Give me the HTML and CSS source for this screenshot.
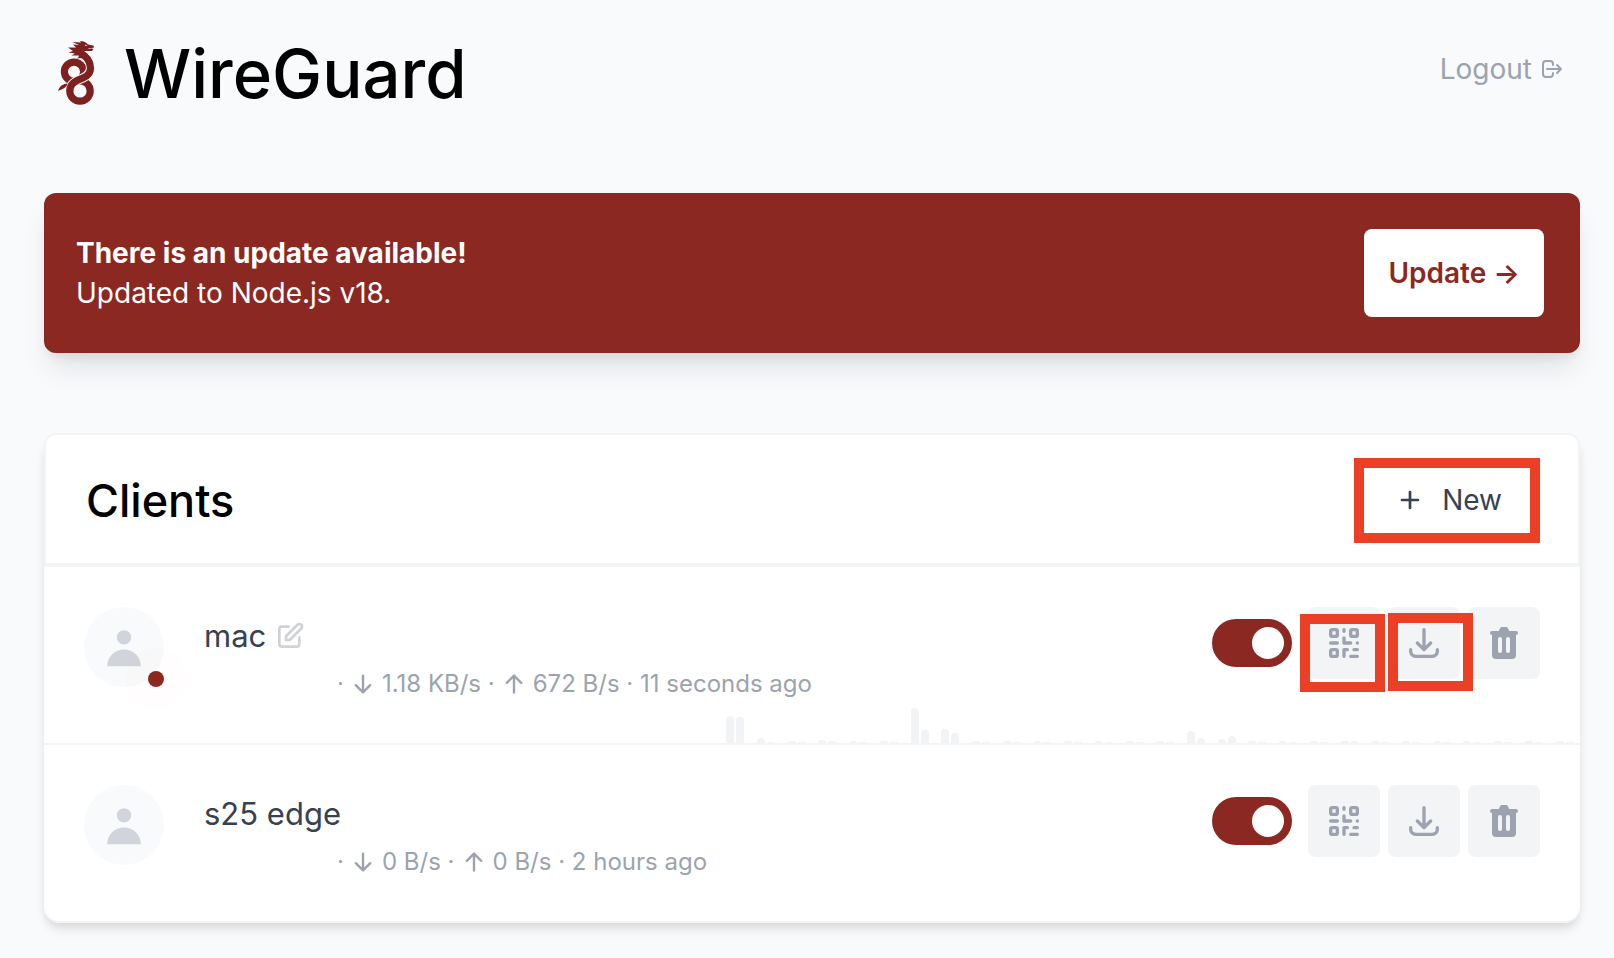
FILE: index.html
```html
<!DOCTYPE html>
<html lang="en">
<head>
<meta charset="utf-8">
<title>WireGuard</title>
<link rel="stylesheet" href="styles.css">
</head>
<body>
<svg class="sprite" aria-hidden="true">
  <symbol id="user" viewBox="0 0 20 20"><path fill="currentColor" d="M10 9a3 3 0 100-6 3 3 0 000 6zm-7 9a7 7 0 1114 0H3z"/></symbol>
  <symbol id="down" viewBox="0 0 20 20"><path fill="currentColor" d="M16.707 10.293a1 1 0 010 1.414l-6 6a1 1 0 01-1.414 0l-6-6a1 1 0 111.414-1.414L9 14.586V3a1 1 0 012 0v11.586l4.293-4.293a1 1 0 011.414 0z"/></symbol>
  <symbol id="up" viewBox="0 0 20 20"><path fill="currentColor" d="M3.293 9.707a1 1 0 010-1.414l6-6a1 1 0 011.414 0l6 6a1 1 0 01-1.414 1.414L11 5.414V17a1 1 0 11-2 0V5.414L4.707 9.707a1 1 0 01-1.414 0z"/></symbol>
  <symbol id="qr" viewBox="0 0 24 24"><path class="stroke" d="M12 4v1m6 11h2m-6 0h-2v4m0-11v3m0 0h.01M12 12h4.01M16 20h4M4 12h4m12 0h.01M5 8h2a1 1 0 001-1V5a1 1 0 00-1-1H5a1 1 0 00-1 1v2a1 1 0 001 1zm12 0h2a1 1 0 001-1V5a1 1 0 00-1-1h-2a1 1 0 00-1 1v2a1 1 0 001 1zM5 20h2a1 1 0 001-1v-2a1 1 0 00-1-1H5a1 1 0 00-1 1v2a1 1 0 001 1z"/></symbol>
  <symbol id="download" viewBox="0 0 24 24"><path class="stroke" d="M4 16v1a3 3 0 003 3h10a3 3 0 003-3v-1m-4-4l-4 4m0 0l-4-4m4 4V4"/></symbol>
  <symbol id="trash" viewBox="0 0 20 20"><path fill="currentColor" fill-rule="evenodd" d="M9 2a1 1 0 00-.894.553L7.382 4H4a1 1 0 000 2v10a2 2 0 002 2h8a2 2 0 002-2V6a1 1 0 100-2h-3.382l-.724-1.447A1 1 0 0011 2H9zM7 8a1 1 0 012 0v6a1 1 0 11-2 0V8zm5-1a1 1 0 00-1 1v6a1 1 0 102 0V8a1 1 0 00-1-1z"/></symbol>
</svg>

<div class="page">
  <header class="top">
    <h1 class="brand">
      <svg class="dragon" viewBox="0 0 40 68" aria-hidden="true">
        <g fill="none" stroke="#7d2020">
          <circle cx="18" cy="31.700" r="9.600" stroke-width="7.200"/>
          <circle cx="24" cy="51" r="10.200" stroke-width="7.200"/>
          <path stroke="#f9fafb" stroke-width="9.200" d="M23 13C30 17 34.500 20 34.500 28C34.500 36 27 38 21 40.500C16 43 13.800 46 13.800 50"/>
          <path stroke-width="7.200" d="M24 13C30 16 34.500 20 34.500 28C34.500 36 27 38 21 40.500C16 43 13.800 46 13.800 51"/>
        </g>
        <path fill="#7d2020" d="M21 18.500L24 15.500L15.500 15.500L19 13.500L12.500 12.500L17 11L12 7.500L20 7.500L17 4.500L23 5L16.500 2L25 2.500L24 1C28 1 30 2.500 32 4.500L37.500 5.500L38 7.500L35 8.200L37.500 9L36 11H31C27 10.500 27 13 29 15L28 19C26 17.500 24 18 21 18.500Z"/>
        <path fill="#7d2020" d="M2 50.800C4 45.500 7 44 11.500 43.500C11 47.500 7 49 2 50.800Z"/>
        <path fill="#f9fafb" d="M29 4.500l2.500 1-2 .6zM32.500 8.200l5-.5-5 1.200z"/>
      </svg>
      <span>WireGuard</span>
    </h1>
    <a class="logout" href="#">Logout
      <svg class="icon-24" viewBox="0 0 24 24" aria-hidden="true"><path class="stroke" d="M17 16l4-4m0 0l-4-4m4 4H7m6 4v1a3 3 0 01-3 3H6a3 3 0 01-3-3V7a3 3 0 013-3h4a3 3 0 013 3v1"/></svg>
    </a>
  </header>

  <section class="banner">
    <div>
      <p class="banner-title">There is an update available!</p>
      <p>Updated to Node.js v18.</p>
    </div>
    <a class="update" href="#">Update →</a>
  </section>

  <main class="card">
    <div class="card-head">
      <h2>Clients</h2>
      <button class="new marked" type="button">
        <svg class="icon-32" viewBox="0 0 24 24" aria-hidden="true"><path class="stroke" d="M12 6v6m0 0v6m0-6h6m-6 0H6"/></svg>
        New
      </button>
    </div>

    <article class="client">
      <div class="avatar">
        <svg class="icon-48" aria-hidden="true"><use href="#user"/></svg>
        <span class="ping"></span><span class="online"></span>
      </div>
      <div class="info">
        <div class="name">mac
          <button class="edit" type="button" aria-label="Edit name"><svg class="icon-32" viewBox="0 0 24 24" aria-hidden="true"><path class="stroke" d="M11 5H6a2 2 0 00-2 2v11a2 2 0 002 2h11a2 2 0 002-2v-5m-1.414-9.414a2 2 0 112.828 2.828L11.828 15H9v-2.828l8.586-8.586z"/></svg></button>
        </div>
        <div class="stats">·
          <svg class="icon-24" aria-hidden="true"><use href="#down"/></svg>
          1.18 KB/s ·
          <svg class="icon-24" aria-hidden="true"><use href="#up"/></svg>
          672 B/s · 11 seconds ago
        </div>
      </div>
      <div class="actions">
        <input class="toggle" type="checkbox" role="switch" aria-label="Enable mac" checked>
        <button class="act" type="button" aria-label="Show QR code"><svg class="icon-40" aria-hidden="true"><use href="#qr"/></svg><span class="mark mark-qr"></span></button>
        <button class="act" type="button" aria-label="Download configuration"><svg class="icon-40" aria-hidden="true"><use href="#download"/></svg><span class="mark mark-download"></span></button>
        <button class="act" type="button" aria-label="Delete client"><svg class="icon-40" aria-hidden="true"><use href="#trash"/></svg></button>
      </div>
      <div class="chart" aria-hidden="true">
        <div><i style="height:27px"></i><i style="height:26px"></i></div>
        <div><i style="height:5px"></i><i style="height:1px"></i></div>
        <div><i style="height:2px"></i><i style="height:1px"></i></div>
        <div><i style="height:3px"></i><i style="height:2px"></i></div>
        <div><i style="height:2px"></i><i style="height:1px"></i></div>
        <div><i style="height:2px"></i><i style="height:1px"></i></div>
        <div><i style="height:35px"></i><i style="height:13px"></i></div>
        <div><i style="height:14px"></i><i style="height:10px"></i></div>
        <div><i style="height:2px"></i><i style="height:1px"></i></div>
        <div><i style="height:2px"></i><i style="height:1px"></i></div>
        <div><i style="height:2px"></i><i style="height:1px"></i></div>
        <div><i style="height:2px"></i><i style="height:1px"></i></div>
        <div><i style="height:2px"></i><i style="height:1px"></i></div>
        <div><i style="height:2px"></i><i style="height:1px"></i></div>
        <div><i style="height:2px"></i><i style="height:1px"></i></div>
        <div><i style="height:12px"></i><i style="height:5px"></i></div>
        <div><i style="height:4px"></i><i style="height:7px"></i></div>
        <div><i style="height:2px"></i><i style="height:1px"></i></div>
        <div><i style="height:2px"></i><i style="height:1px"></i></div>
        <div><i style="height:2px"></i><i style="height:1px"></i></div>
        <div><i style="height:2px"></i><i style="height:2px"></i></div>
        <div><i style="height:2px"></i><i style="height:1px"></i></div>
        <div><i style="height:2px"></i><i style="height:1px"></i></div>
        <div><i style="height:2px"></i><i style="height:1px"></i></div>
        <div><i style="height:2px"></i><i style="height:1px"></i></div>
        <div><i style="height:2px"></i><i style="height:1px"></i></div>
        <div><i style="height:2px"></i><i style="height:1px"></i></div>
        <div><i style="height:2px"></i><i style="height:1px"></i></div>
      </div>
    </article>

    <article class="client">
      <div class="avatar">
        <svg class="icon-48" aria-hidden="true"><use href="#user"/></svg>
      </div>
      <div class="info">
        <div class="name">s25 edge</div>
        <div class="stats">·
          <svg class="icon-24" aria-hidden="true"><use href="#down"/></svg>
          0 B/s ·
          <svg class="icon-24" aria-hidden="true"><use href="#up"/></svg>
          0 B/s · 2 hours ago
        </div>
      </div>
      <div class="actions">
        <input class="toggle" type="checkbox" role="switch" aria-label="Enable s25 edge" checked>
        <button class="act" type="button" aria-label="Show QR code"><svg class="icon-40" aria-hidden="true"><use href="#qr"/></svg></button>
        <button class="act" type="button" aria-label="Download configuration"><svg class="icon-40" aria-hidden="true"><use href="#download"/></svg></button>
        <button class="act" type="button" aria-label="Delete client"><svg class="icon-40" aria-hidden="true"><use href="#trash"/></svg></button>
      </div>
    </article>
  </main>
</div>
</body>
</html>
```
FILE: styles.css
```css
* { box-sizing: border-box; margin: 0; }
body { background: #f9fafb; color: #000; font-family: Inter, "Liberation Sans", sans-serif; font-size: 28px; line-height: 40px; }
button { border: 0; padding: 0; background: none; font: inherit; color: inherit; }
a { color: inherit; text-decoration: none; }
svg { flex: none; }
.sprite { position: absolute; width: 0; height: 0; }
.stroke { fill: none; stroke: currentColor; stroke-width: 2; stroke-linecap: round; stroke-linejoin: round; }
.icon-24 { width: 24px; height: 24px; }
.icon-32 { width: 32px; height: 32px; }
.icon-40 { width: 40px; height: 40px; }
.icon-48 { width: 48px; height: 48px; }

.page { padding: 38px 34px 36px 44px; }
.top { display: flex; justify-content: space-between; align-items: flex-start; margin-bottom: 83px; padding: 0 16px 0 12px; }
.brand { display: flex; align-items: center; gap: 28px; font-size: 67px; line-height: 72px; font-weight: 500; }
.dragon { width: 40px; height: 68px; }
.logout { display: flex; align-items: center; gap: 8px; margin-top: 11px; color: #9ca3af; }

.banner { display: flex; justify-content: space-between; align-items: center; margin-bottom: 80px; padding: 36px 36px 36px 32px; border-radius: 12px; background: #8c2822; color: #fff; box-shadow: 0 20px 30px -6px rgba(0,0,0,.1), 0 8px 12px -4px rgba(0,0,0,.06); }
.banner-title { font-weight: 700; }
.update { padding: 24px; border-radius: 8px; background: #fff; color: #8c2822; font-weight: 600; }

.card { border-radius: 16px; background: #fff; box-shadow: 0 8px 12px -2px rgba(0,0,0,.1), 0 4px 8px -2px rgba(0,0,0,.06); }
.card-head { display: flex; justify-content: space-between; align-items: center; padding: 23px 38px 20px 40px; border: 2px solid #f3f4f6; border-bottom-width: 4px; border-radius: 12px 12px 0 0; }
h2 { font-size: 45px; line-height: 48px; font-weight: 500; }
.new { display: flex; align-items: center; gap: 16px; padding: 12px 28px 13px 30px; color: #374151; }
.marked { border: 10px solid #eb4026; }

.client { position: relative; display: flex; min-height: 178px; padding: 40px; border-bottom: 2px solid #f3f4f6; }
.client:last-child { border-radius: 0 0 16px 16px; }
.avatar { position: relative; display: flex; align-items: center; justify-content: center; width: 80px; height: 80px; border-radius: 50%; background: #f9fafb; color: #d1d5db; }
.online { position: absolute; right: 0; bottom: 0; width: 16px; height: 16px; border-radius: 50%; background: #8c2822; }
.ping { position: absolute; right: -23px; bottom: -23px; width: 62px; height: 62px; border-radius: 50%; background: rgba(239,68,68,.012); }
.info { flex: 1; display: flex; flex-direction: column; gap: 12px; margin-left: 40px; padding-top: 9px; }
.name { display: flex; align-items: center; gap: 8px; color: #374151; font-size: 31px; line-height: 40px; }
.edit { display: flex; color: #d0d2d6; }
.stats { display: flex; align-items: center; gap: 7px; padding-left: 133px; color: #9ca3af; font-size: 24px; line-height: 32px; }

.actions { display: flex; align-items: flex-start; gap: 8px; }
.act { position: relative; display: flex; align-items: center; justify-content: center; width: 72px; height: 72px; border-radius: 8px; background: #f3f4f6; color: #9ca3af; }
.toggle { appearance: none; display: flex; align-items: center; justify-content: flex-end; width: 80px; height: 48px; margin: 12px 8px 0 0; padding: 8px; border-radius: 24px; background: #8c2822; }
.toggle::before { content: ""; width: 32px; height: 32px; border-radius: 50%; background: #fff; }
.toggle:not(:checked) { justify-content: flex-start; background: #e5e7eb; }
.mark { position: absolute; z-index: 1; width: 85px; height: 78px; border: 10px solid #eb4026; }
.mark-qr { left: -8px; top: 7px; }
.mark-download { left: 0; top: 6px; }

.chart { position: absolute; right: 0; bottom: 0; display: flex; width: 56%; }
.chart div { flex: 1; display: flex; justify-content: center; align-items: flex-end; gap: 2px; }
.chart i { width: 8px; border-radius: 4px 4px 0 0; background: #f2f3f5; }
```
